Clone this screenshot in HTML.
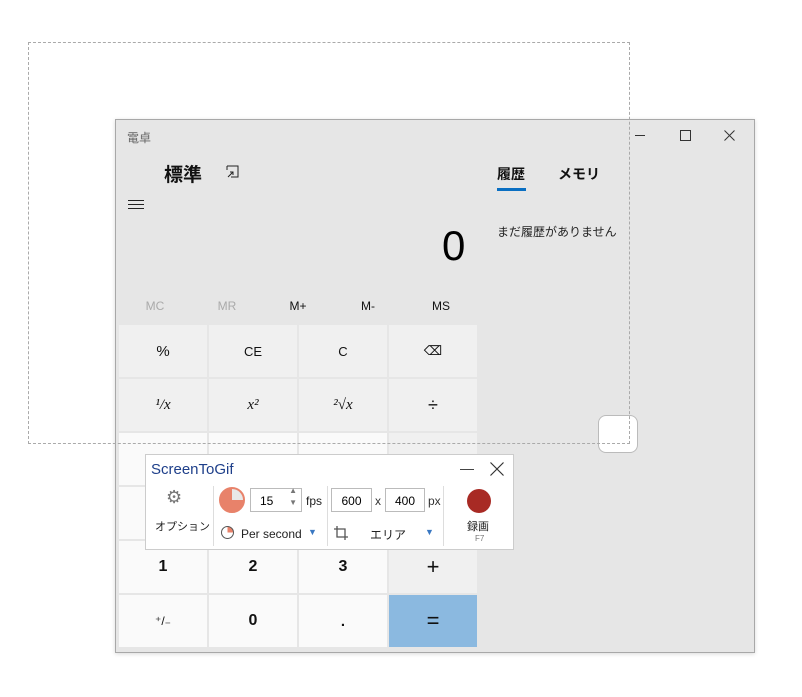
<html><head><style>
body{margin:0;width:802px;height:697px;background:#fff;position:relative;overflow:hidden;font-family:"Liberation Sans","Noto Sans CJK JP",sans-serif}
.a{position:absolute}
.calc{left:115px;top:119px;width:638px;height:532px;background:#e6e6e6;border:1px solid #a8a8a8;box-shadow:0 1px 4px rgba(0,0,0,.15)}
.b{position:absolute;width:88px;height:52px;display:flex;align-items:center;justify-content:center;font-size:15px;color:#111}
.g{background:#f0f0f0}.w{background:#fafafa}
.m{position:absolute;top:299px;font-size:12px;color:#111;width:60px;text-align:center}
</style></head><body>
<div class="a calc"></div>
<div class="a" style="left:127px;top:129px;font-size:12px;color:#666">電卓</div>
<div class="a" style="left:635px;top:135px;width:10px;height:1px;background:#333"></div>
<div class="a" style="left:680px;top:130px;width:9px;height:9px;border:1px solid #333"></div>
<svg class="a" style="left:724px;top:130px" width="11" height="11"><path d="M0.5 0.5L10.5 10.5M10.5 0.5L0.5 10.5" stroke="#333" stroke-width="1"/></svg>
<div class="a" style="left:164px;top:160px;font-size:19px;font-weight:bold;color:#111">標準</div>
<svg class="a" style="left:226px;top:165px" width="14" height="13"><path d="M1 1H12V12H5M1 1V5M2 12L7 7M4 7H7V10" stroke="#222" fill="none"/></svg>
<div class="a" style="left:128px;top:200px;width:16px;height:1px;background:#222;box-shadow:0 4px 0 #222,0 8px 0 #222"></div>
<div class="a" style="left:442px;top:222px;font-size:42px;color:#000">0</div>
<div class="a" style="left:497px;top:164px;font-size:14px;font-weight:bold;color:#111">履歴</div>
<div class="a" style="left:497px;top:188px;width:29px;height:3px;background:#0a6fc2"></div>
<div class="a" style="left:558px;top:164px;font-size:14px;font-weight:bold;color:#111">メモリ</div>
<div class="a" style="left:497px;top:223px;font-size:12px;color:#222">まだ履歴がありません</div>
<div class="m" style="left:125px;color:#aaa">MC</div><div class="m" style="left:197px;color:#aaa">MR</div><div class="m" style="left:268px">M+</div><div class="m" style="left:338px">M-</div><div class="m" style="left:411px">MS</div>
<div class="b g" style="left:119px;top:325px">%</div><div class="b g" style="left:209px;top:325px;font-size:13px">CE</div><div class="b g" style="left:299px;top:325px;font-size:13px">C</div><div class="b g" style="left:389px;top:325px;font-size:13px">⌫</div>
<div class="b g" style="left:119px;top:379px;font-family:'Liberation Serif';font-style:italic">¹/x</div><div class="b g" style="left:209px;top:379px;font-family:'Liberation Serif';font-style:italic">x²</div><div class="b g" style="left:299px;top:379px;font-family:'Liberation Serif';font-style:italic">²√x</div><div class="b g" style="left:389px;top:379px;font-size:18px">÷</div>
<div class="b w" style="left:119px;top:433px"></div><div class="b w" style="left:209px;top:433px"></div><div class="b w" style="left:299px;top:433px"></div><div class="b g" style="left:389px;top:433px"></div>
<div class="b w" style="left:119px;top:487px"></div><div class="b w" style="left:209px;top:487px"></div><div class="b w" style="left:299px;top:487px"></div><div class="b g" style="left:389px;top:487px"></div>
<div class="b w" style="left:119px;top:541px;font-weight:bold;font-size:16px">1</div><div class="b w" style="left:209px;top:541px;font-weight:bold;font-size:16px">2</div><div class="b w" style="left:299px;top:541px;font-weight:bold;font-size:16px">3</div><div class="b g" style="left:389px;top:541px;font-size:22px;font-weight:300">+</div>
<div class="b w" style="left:119px;top:595px;font-size:12px">⁺/₋</div><div class="b w" style="left:209px;top:595px;font-weight:bold;font-size:16px">0</div><div class="b w" style="left:299px;top:595px;font-weight:bold">.</div><div class="b" style="left:389px;top:595px;background:#8bb9e0;font-size:22px">=</div>
<div class="a" style="left:598px;top:415px;width:38px;height:36px;border:1px solid #bbb;border-radius:8px;background:#fff"></div>
<div class="a" style="left:28px;top:42px;width:600px;height:400px;border:1px dashed #aaa"></div>
<div class="a" style="left:145px;top:454px;width:367px;height:94px;background:#fff;border:1px solid #ccc"></div>
<div class="a" style="left:151px;top:461px;font-size:15px;color:#1e3f8a">ScreenToGif</div>
<div class="a" style="left:460px;top:469px;width:14px;height:1px;background:#444"></div>
<svg class="a" style="left:490px;top:462px" width="14" height="14"><path d="M0.5 0.5L13.5 13.5M13.5 0.5L0.5 13.5" stroke="#333" stroke-width="1.2"/></svg>
<div class="a" style="left:166px;top:487px;font-size:18px;color:#777">⚙</div>
<div class="a" style="left:155px;top:518px;font-size:11px;color:#222">オプション</div>
<div class="a" style="left:213px;top:486px;width:1px;height:60px;background:#ddd"></div>
<div class="a" style="left:327px;top:486px;width:1px;height:60px;background:#ddd"></div>
<div class="a" style="left:443px;top:486px;width:1px;height:60px;background:#ddd"></div>
<div class="a" style="left:219px;top:487px;width:26px;height:26px;border-radius:50%;background:conic-gradient(#e8e8e8 0 25%,#e8826a 25%);border:2px solid #e8826a;box-sizing:border-box"></div>
<div class="a" style="left:250px;top:488px;width:52px;height:24px;border:1px solid #bbb;font-size:12px;line-height:24px;padding-left:9px;box-sizing:border-box">15<span style="position:absolute;right:4px;top:-4px;font-size:8px;color:#777;line-height:12px">▲<br>▼</span></div>
<div class="a" style="left:306px;top:494px;font-size:12px;color:#222">fps</div>
<div class="a" style="left:331px;top:488px;width:41px;height:24px;border:1px solid #bbb;font-size:12px;line-height:24px;text-align:center;box-sizing:border-box">600</div>
<div class="a" style="left:375px;top:494px;font-size:12px;color:#333">x</div>
<div class="a" style="left:385px;top:488px;width:40px;height:24px;border:1px solid #bbb;font-size:12px;line-height:24px;text-align:center;box-sizing:border-box">400</div>
<div class="a" style="left:428px;top:494px;font-size:12px;color:#333">px</div>
<div class="a" style="left:221px;top:526px;width:13px;height:13px;border-radius:50%;border:1px solid #555;box-sizing:border-box;background:conic-gradient(#e8826a 0 25%,#fff 25%)"></div>
<div class="a" style="left:241px;top:527px;font-size:12px;color:#222">Per second</div>
<div class="a" style="left:308px;top:527px;font-size:9px;color:#3a78c2">▼</div>
<svg class="a" style="left:333px;top:525px" width="16" height="16"><path d="M4 1V12H15M1 4H12V15" stroke="#555" fill="none" stroke-width="1.3"/></svg>
<div class="a" style="left:370px;top:526px;font-size:12px;color:#222">エリア</div>
<div class="a" style="left:425px;top:527px;font-size:9px;color:#3a78c2">▼</div>
<div class="a" style="left:467px;top:489px;width:24px;height:24px;border-radius:50%;background:#a82a24"></div>
<div class="a" style="left:467px;top:518px;font-size:11px;color:#222">録画</div>
<div class="a" style="left:475px;top:534px;font-size:8px;color:#777">F7</div>
</body></html>
